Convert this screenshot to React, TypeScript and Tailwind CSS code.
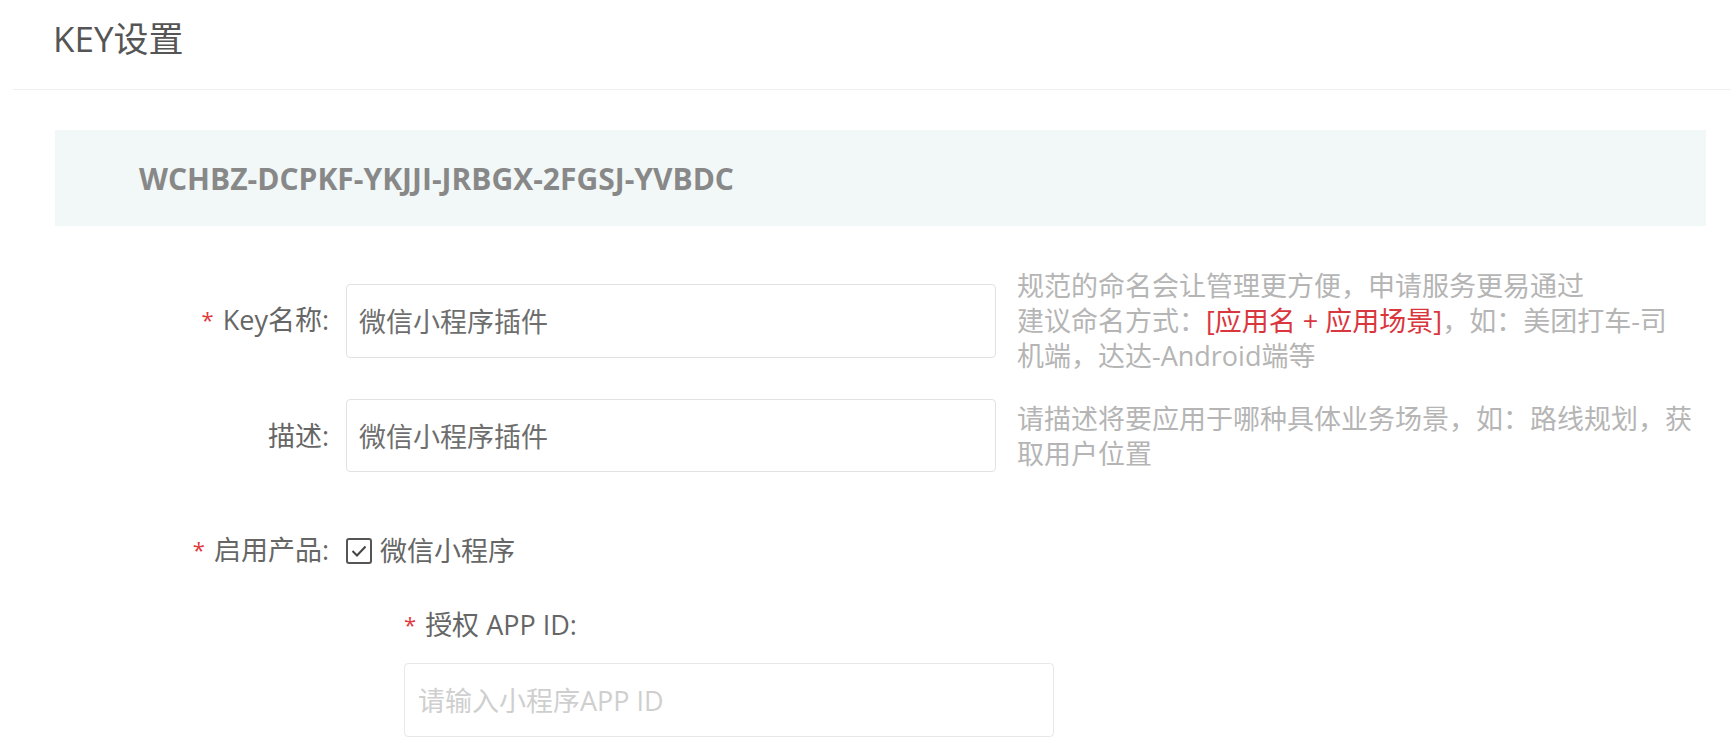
import React from "react";

const Star = () => (
  <span className="mr-[9px] text-[22px] text-[#e0393e] relative -top-[2px]">*</span>
);

const Label = ({ required, children }: { required?: boolean; children: React.ReactNode }) => (
  <div className="w-[346px] shrink-0 pr-[17px] text-right text-[27px] leading-[36px] text-[#666]">
    {required && <Star />}
    {children}
  </div>
);

const CheckIcon = () => (
  <svg width="26" height="26" viewBox="0 0 26 26" fill="none">
    <rect x="1" y="1" width="24" height="24" rx="2" stroke="#555" strokeWidth="2" />
    <path d="M6.5 13 L11 17.5 L19.5 8.5" stroke="#444" strokeWidth="2" fill="none" />
  </svg>
);

export default function App() {
  return (
    <div className="min-h-screen bg-white font-['Open_Sans','Noto_Sans_CJK_SC',sans-serif]">
      <div className="ml-[13px] h-[90px] border-b border-[#efefef] pl-[40px] pt-[20px]">
        <h1 className="text-[35px] leading-[38px] text-[#555]">KEY设置</h1>
      </div>

      <div className="ml-[55px] mr-[24px] mt-[40px] flex h-[96px] items-center bg-[#f2f8f8] pl-[84px]">
        <span className="text-[30px] font-bold text-[#888]">WCHBZ-DCPKF-YKJJI-JRBGX-2FGSJ-YVBDC</span>
      </div>

      <div className="mt-[42px] flex items-center">
        <Label required>Key名称:</Label>
        <input
          readOnly
          defaultValue="微信小程序插件"
          className="h-[74px] w-[650px] rounded-[4px] border border-[#e2e2e2] px-[12px] text-[27px] text-[#6e6e6e] outline-none"
        />
        <div className="ml-[21px] text-[27px] leading-[35px] text-[#b5b5b5]">
          规范的命名会让管理更方便，申请服务更易通过
          <br />
          建议命名方式：<span className="text-[#d9363e]">[应用名 + 应用场景]</span>，如：美团打车-司
          <br />
          机端，达达-Android端等
        </div>
      </div>

      <div className="mt-[26px] flex items-center">
        <Label>描述:</Label>
        <input
          readOnly
          defaultValue="微信小程序插件"
          className="h-[73px] w-[650px] rounded-[4px] border border-[#e2e2e2] px-[12px] text-[27px] text-[#6e6e6e] outline-none"
        />
        <div className="ml-[21px] text-[27px] leading-[35px] text-[#b5b5b5]">
          请描述将要应用于哪种具体业务场景，如：路线规划，获
          <br />
          取用户位置
        </div>
      </div>

      <div className="mt-[60px] flex items-center">
        <Label required>启用产品:</Label>
        <div className="flex items-center gap-[8px] text-[27px] leading-[36px] text-[#666]">
          <CheckIcon />
          <span>微信小程序</span>
        </div>
      </div>

      <div className="ml-[404px] mt-[38px]">
        <div className="text-[27px] leading-[36px] text-[#666]">
          <Star />
          授权 APP ID:
        </div>
        <input
          readOnly
          placeholder="请输入小程序APP ID"
          className="mt-[19px] h-[74px] w-[650px] rounded-[4px] border border-[#e8e8e8] px-[13px] text-[27px] text-[#6e6e6e] outline-none placeholder:text-[#cfcfcf]"
        />
      </div>
    </div>
  );
}
